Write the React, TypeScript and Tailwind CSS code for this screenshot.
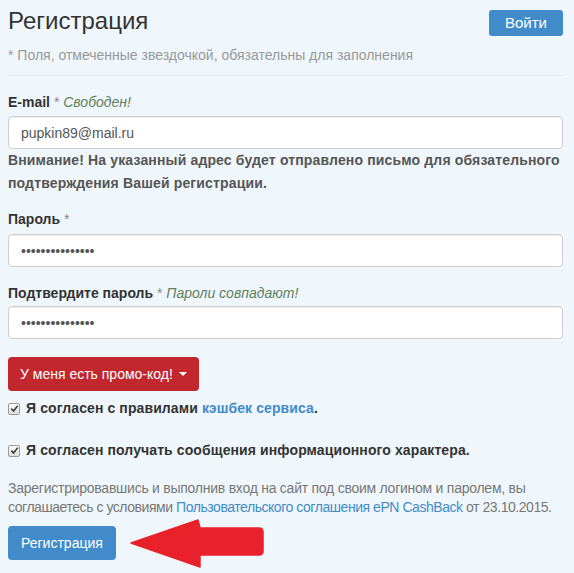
import React from "react";

const font = { fontFamily: '"Liberation Sans", Arial, sans-serif' };

function Check() {
  return (
    <span className="mt-[1px] flex h-[12px] w-[12px] shrink-0 items-center justify-center rounded-[2px] border border-[#9a9a9a] bg-gradient-to-b from-white to-[#dcdcdc]">
      <svg viewBox="0 0 10 10" className="h-[9px] w-[9px]">
        <path d="M1.5 5.2 L4 7.8 L8.6 1.8" fill="none" stroke="#3a3a3a" strokeWidth="1.8" />
      </svg>
    </span>
  );
}

function Field({ type, value }: { type: string; value: string }) {
  return (
    <input
      type={type}
      defaultValue={value}
      readOnly
      className="h-[33px] w-full rounded-[4px] border border-[#cfcfcf] bg-white px-[12px] text-[14px] text-[#555] shadow-[inset_0_1px_1px_rgba(0,0,0,0.075)] outline-none"
      style={font}
    />
  );
}

export default function App() {
  return (
    <div className="relative min-h-[573px] w-[574px] bg-[#f0f7fc] pl-2 pr-[11px] text-[14px] leading-[20px] text-[#333]" style={font}>
      {/* Header */}
      <div className="flex items-start justify-between pt-2">
        <h1 className="text-[24px] leading-[26px] font-normal text-[#333]">Регистрация</h1>
        <button className="mt-[2px] h-[26px] rounded-[3px] bg-[#428bca] px-[16px] text-[15px] text-white">Войти</button>
      </div>
      <p className="mt-[9px] text-[#999]">* Поля, отмеченные звездочкой, обязательны для заполнения</p>
      <div className="mt-[10px] border-t border-[#e3e9ed]" />

      {/* E-mail */}
      <div className="mt-[16px]">
        <span className="font-bold">E-mail</span> <span className="text-[#888]">*</span>{" "}
        <em className="text-[#5f7f5f]">Свободен!</em>
      </div>
      <div className="mt-[4px]">
        <Field type="text" value="pupkin89@mail.ru" />
      </div>
      <p className="leading-[23px] font-bold tracking-[0.15px] text-[#555]">
        Внимание! На указанный адрес будет отправлено письмо для обязательного подтверждения Вашей регистрации.
      </p>

      {/* Password */}
      <div className="mt-[14px]">
        <span className="font-bold">Пароль</span> <span className="text-[#888]">*</span>
      </div>
      <div className="mt-[5px]">
        <Field type="password" value="123456789012345" />
      </div>

      <div className="mt-[16px]">
        <span className="font-bold">Подтвердите пароль</span> <span className="text-[#888]">*</span>{" "}
        <em className="text-[#5f7f5f]">Пароли совпадают!</em>
      </div>
      <div className="mt-[3px]">
        <Field type="password" value="123456789012345" />
      </div>

      {/* Promo */}
      <button className="mt-[18px] flex h-[34px] items-center gap-[6px] rounded-[4px] bg-[#c1272d] px-[12px] text-[14px] text-white">
        У меня есть промо-код!
        <span className="h-0 w-0 border-x-[4px] border-t-[4px] border-x-transparent border-t-white" />
      </button>

      {/* Checkboxes */}
      <label className="mt-[7px] flex items-center gap-[6px] font-bold tracking-[0.1px]">
        <Check />
        <span>
          Я согласен с правилами <a className="text-[#428bca]">кэшбек сервиса</a>.
        </span>
      </label>
      <label className="mt-[22px] flex items-center gap-[6px] font-bold tracking-[0.1px]">
        <Check />
        <span>Я согласен получать сообщения информационного характера.</span>
      </label>

      <p className="mt-[19px] leading-[19px] text-[#777]">
        <span className="block whitespace-nowrap tracking-[-0.25px]">
          Зарегистрировавшись и выполнив вход на сайт под своим логином и паролем, вы
        </span>
        <span className="block whitespace-nowrap tracking-[-0.45px]">
          соглашаетесь с условиями <a className="text-[#428bca]">Пользовательского соглашения ePN CashBack</a> от 23.10.2015.
        </span>
      </p>

      <button className="mt-[9px] h-[34px] rounded-[4px] bg-[#428bca] px-[13px] text-[14px] text-white">Регистрация</button>

      {/* Red annotation arrow */}
      <svg className="pointer-events-none absolute left-0 top-0" width="574" height="573" viewBox="0 0 574 573">
        <path
          d="M131 543 L198 520 L200 528 L259 528 Q263 528 263 532 L263 551 Q263 555 259 555 L200 555 L200 567 Z"
          fill="#e8212a"
          stroke="#e8212a"
          strokeWidth="1.5"
          strokeLinejoin="round"
        />
      </svg>
    </div>
  );
}
